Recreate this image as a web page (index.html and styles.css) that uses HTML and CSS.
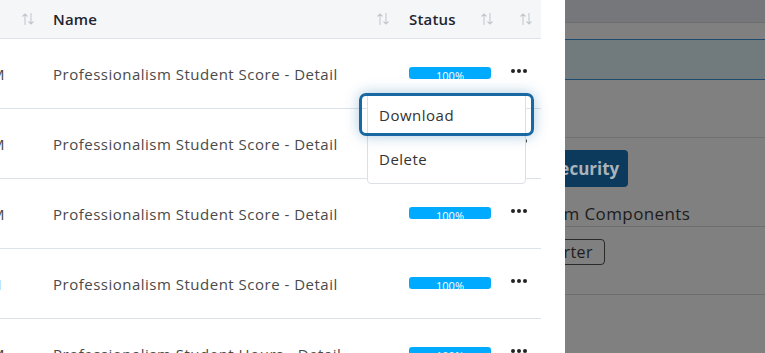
FILE: index.html
```html
<!DOCTYPE html>
<html lang="en">
<head>
    <meta charset="UTF-8">
    <meta name="viewport" content="width=device-width, initial-scale=1.0">
    <title>Reports</title>
    <link rel="stylesheet" href="styles.css">
</head>
<body>
    <div class="panel">
        <div class="table">
            <div class="row head">
                <div class="cell c-date"><svg class="sort" viewBox="0 0 14 14"><path d="M4 13V2M1.5 4.5L4 2l2.5 2.5M10 1v11M7.5 9.5L10 12l2.5-2.5"/></svg></div>
                <div class="cell c-name"><span>Name</span><svg class="sort" viewBox="0 0 14 14"><path d="M4 13V2M1.5 4.5L4 2l2.5 2.5M10 1v11M7.5 9.5L10 12l2.5-2.5"/></svg></div>
                <div class="cell c-status"><span>Status</span><svg class="sort" viewBox="0 0 14 14"><path d="M4 13V2M1.5 4.5L4 2l2.5 2.5M10 1v11M7.5 9.5L10 12l2.5-2.5"/></svg></div>
                <div class="cell c-act"><svg class="sort" viewBox="0 0 14 14"><path d="M4 13V2M1.5 4.5L4 2l2.5 2.5M10 1v11M7.5 9.5L10 12l2.5-2.5"/></svg></div>
            </div>
            <div class="row">
                <div class="cell c-date">09/12/2024 4:15 PM</div>
                <div class="cell c-name">Professionalism Student Score - Detail</div>
                <div class="cell c-status"><div class="bar">100%</div></div>
                <div class="cell c-act"><svg class="dots" viewBox="0 0 16 4"><circle cx="2" cy="2" r="2"/><circle cx="8" cy="2" r="2"/><circle cx="14" cy="2" r="2"/></svg></div>
            </div>
            <div class="row">
                <div class="cell c-date">09/12/2024 4:02 PM</div>
                <div class="cell c-name">Professionalism Student Score - Detail</div>
                <div class="cell c-status"></div>
                <div class="cell c-act"><svg class="dots" viewBox="0 0 16 4"><circle cx="2" cy="2" r="2"/><circle cx="8" cy="2" r="2"/><circle cx="14" cy="2" r="2"/></svg></div>
            </div>
            <div class="row">
                <div class="cell c-date">09/11/2024 3:48 PM</div>
                <div class="cell c-name">Professionalism Student Score - Detail</div>
                <div class="cell c-status"><div class="bar">100%</div></div>
                <div class="cell c-act"><svg class="dots" viewBox="0 0 16 4"><circle cx="2" cy="2" r="2"/><circle cx="8" cy="2" r="2"/><circle cx="14" cy="2" r="2"/></svg></div>
            </div>
            <div class="row">
                <div class="cell c-date short">09/10/2024 1:20 PM</div>
                <div class="cell c-name">Professionalism Student Score - Detail</div>
                <div class="cell c-status"><div class="bar">100%</div></div>
                <div class="cell c-act"><svg class="dots" viewBox="0 0 16 4"><circle cx="2" cy="2" r="2"/><circle cx="8" cy="2" r="2"/><circle cx="14" cy="2" r="2"/></svg></div>
            </div>
            <div class="row">
                <div class="cell c-date">09/10/2024 1:05 PM</div>
                <div class="cell c-name">Professionalism Student Hours - Detail</div>
                <div class="cell c-status"><div class="bar">100%</div></div>
                <div class="cell c-act"><svg class="dots" viewBox="0 0 16 4"><circle cx="2" cy="2" r="2"/><circle cx="8" cy="2" r="2"/><circle cx="14" cy="2" r="2"/></svg></div>
            </div>
        </div>

        <div class="menu">
            <div class="menu-item focused">Download</div>
            <div class="menu-item">Delete</div>
        </div>
    </div>

    <div class="backdrop">
        <div class="bd-top"></div>
        <div class="bd-band"></div>
        <div class="bd-space"></div>
        <div class="bd-section">
            <div class="bd-btn">Security</div>
            <div class="bd-title">Custom Components</div>
            <div class="bd-body">
                <span class="bd-tag">Starter</span>
            </div>
        </div>
    </div>
</body>
</html>
```

FILE: styles.css
```css
* {
    margin: 0;
    padding: 0;
    box-sizing: border-box;
}

body {
    font-family: 'Open Sans', 'Liberation Sans', sans-serif;
    width: 765px;
    height: 353px;
    overflow: hidden;
    display: flex;
    background: #fff;
    color: #4a4a4a;
}

/* left panel with the table */
.panel {
    width: 565px;
    flex-shrink: 0;
    position: relative;
    overflow: hidden;
    background: #fff;
}

.table {
    width: 541px;
}

.row {
    display: grid;
    grid-template-columns: 45px 356px 99px 41px;
    height: 70px;
    border-bottom: 1px solid #dde3ea;
    align-items: center;
    font-size: 15px;
    letter-spacing: 0.5px;
}

.row.head {
    height: 39px;
    background: #f5f6f8;
    color: #1f2530;
    font-weight: 600;
    font-size: 15px;
    letter-spacing: 0.2px;
}

.cell {
    display: flex;
    align-items: center;
    white-space: nowrap;
    height: 100%;
}

.c-date {
    justify-content: flex-end;
    padding-right: 40px;
}

.c-date.short {
    padding-right: 43px;
}

.head .c-date {
    padding-right: 10px;
}

.c-name {
    padding-left: 8px;
    justify-content: space-between;
    padding-right: 11px;
}

.c-status {
    padding-left: 8px;
    justify-content: space-between;
    padding-right: 6px;
}

.c-act {
    justify-content: flex-start;
    padding-left: 11px;
}

.head .c-act {
    padding-left: 19px;
}

.sort {
    width: 14px;
    height: 14px;
    fill: none;
    stroke: #c3c8ce;
    stroke-width: 1.1;
}

.bar {
    width: 82px;
    height: 12px;
    margin-top: -1px;
    border-radius: 3px;
    background: #00aaff;
    color: #fff;
    font-size: 11px;
    letter-spacing: 0;
    line-height: 12px;
    padding-top: 3px;
    text-align: center;
    overflow: hidden;
}

.dots {
    width: 16px;
    height: 4px;
    fill: #222;
    margin-top: -5px;
}

/* row action menu */
.menu {
    position: absolute;
    left: 367px;
    top: 93px;
    width: 159px;
    height: 91px;
    background: #fff;
    border: 1px solid #dcdfe4;
    border-radius: 4px;
}

.menu-item {
    height: 48px;
    display: flex;
    align-items: center;
    padding-left: 11px;
    font-size: 15px;
    letter-spacing: 0.5px;
    color: #333;
    position: relative;
}

.menu-item.focused {
    height: 41px;
}

.menu-item.focused::after {
    content: "";
    position: absolute;
    top: -1px;
    bottom: -1px;
    left: -9px;
    right: -9px;
    border: 3px solid #1868a3;
    border-radius: 7px;
    box-shadow: 0 0 14px rgba(24, 104, 163, 0.35);
}

/* dimmed page behind the panel */
.backdrop {
    flex: 1;
    background: #808080;
    overflow: hidden;
    color: #1c1c1c;
    white-space: nowrap;
}

.bd-top {
    height: 23px;
    background: #76777b;
    border-bottom: 1px solid #6d6d6f;
    margin-bottom: 16px;
}

.bd-band {
    height: 41px;
    background: #717a7d;
    border-top: 1px solid #1c4b6f;
    border-bottom: 1px solid #1c4b6f;
}

.bd-space {
    height: 58px;
    border-bottom: 1px solid #707070;
}

.bd-section {
    padding-top: 12px;
}

.bd-btn {
    display: inline-block;
    margin-left: -25px;
    height: 37px;
    padding: 0 9px 0 10px;
    line-height: 37px;
    background: #0b3a5c;
    color: #aab3ba;
    font-weight: 700;
    font-size: 17px;
    border-radius: 4px;
}

.bd-title {
    margin-left: -49px;
    margin-top: 16px;
    font-size: 17px;
    letter-spacing: 0.4px;
    line-height: 22px;
    padding-bottom: 1px;
    border-bottom: 1px solid #6e6e6e;
}

.bd-body {
    height: 68px;
    padding-top: 12px;
    border-bottom: 1px solid #6e6e6e;
}

.bd-tag {
    display: inline-block;
    margin-left: -37px;
    height: 26px;
    line-height: 24px;
    padding: 0 11px 0 10px;
    border: 1px solid #2a2a2a;
    border-radius: 4px;
    font-size: 16px;
    letter-spacing: 0.4px;
}
```
